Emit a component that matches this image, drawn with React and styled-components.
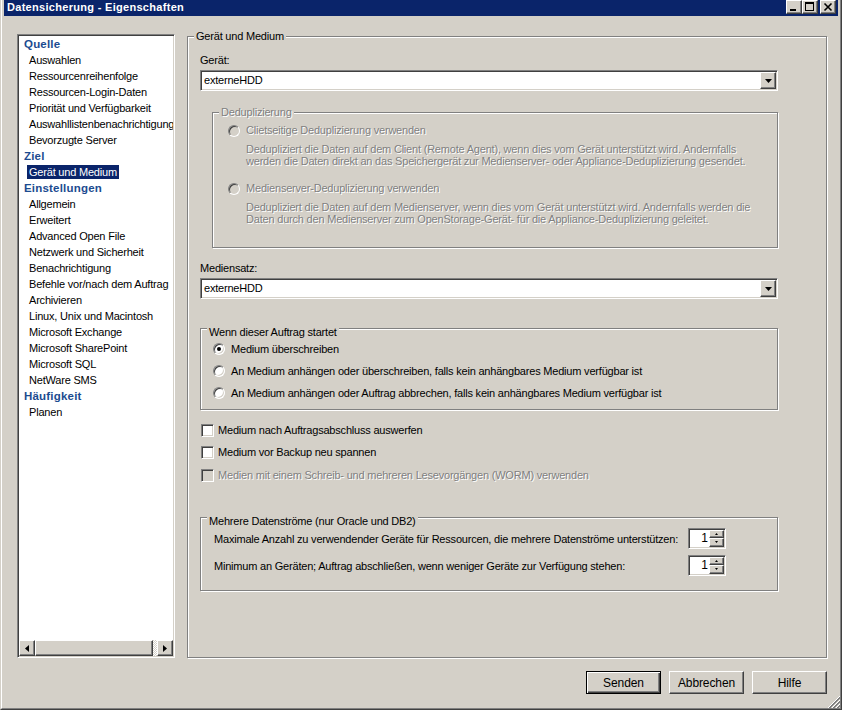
import React from "react";
import styled, { createGlobalStyle, css } from "styled-components";

const GlobalStyle = createGlobalStyle`
  * { box-sizing: border-box; }
  html, body { margin: 0; padding: 0; background: #d4d0c8; }
  body {
    font-family: "Liberation Sans", Arial, sans-serif;
    font-size: 11px;
    letter-spacing: -0.2px;
    color: #000;
  }
`;

// classic 3d borders
const raised = css`
  background: #d4d0c8;
  border: 1px solid;
  border-color: #fff #404040 #404040 #fff;
  box-shadow: inset -1px -1px #808080;
`;

const sunken = css`
  border: 1px solid;
  border-color: #808080 #fff #fff #808080;
  box-shadow: inset 1px 1px #404040, inset -1px -1px #d4d0c8;
`;

const disabledText = css`
  color: #808080;
  text-shadow: 1px 1px 0 #fff;
`;

const Frame = styled.div`
  position: relative;
  width: 842px;
  height: 710px;
  background: #d4d0c8;
  border-left: 1px solid #d4d0c8;
  border-right: 1px solid #404040;
  border-bottom: 1px solid #404040;
`;

const Window = styled.div`
  height: 100%;
  display: flex;
  flex-direction: column;
  border-left: 1px solid #fff;
  border-right: 1px solid #808080;
  border-bottom: 1px solid #808080;
  padding: 0 2px 1px;
`;

const TitleBar = styled.div`
  flex: none;
  height: 16px;
  background: #0a246a;
  display: flex;
  align-items: flex-start;
  justify-content: space-between;
  padding: 0 2px 0 3px;
`;

const Title = styled.span`
  color: #fff;
  font-weight: bold;
  font-size: 11px;
  letter-spacing: 0.3px;
  line-height: 14px;
  white-space: nowrap;
`;

const CaptionButtons = styled.div`
  display: flex;
`;

const CaptionButton = styled.div`
  ${raised};
  width: 16px;
  height: 14px;
  display: flex;
  align-items: center;
  justify-content: center;
  margin-left: ${(p) => (p.$gap ? "2px" : "0")};
  svg { display: block; }
`;

const Body = styled.div`
  flex: 1;
  min-height: 0;
  display: flex;
  flex-direction: column;
  padding: 18px 11px 13px 13px;
`;

const Main = styled.div`
  flex: 1;
  min-height: 0;
  display: flex;
  gap: 12px;
`;

const ListBox = styled.div`
  ${sunken};
  flex: none;
  width: 158px;
  padding: 1px;
  background: #fff;
  display: flex;
  flex-direction: column;
`;

const ListItems = styled.div`
  flex: 1;
  overflow: hidden;
`;

const NavRow = styled.div`
  height: 16px;
  display: flex;
  align-items: center;
  white-space: nowrap;
  padding-left: ${(p) => (p.$header ? "5px" : "8px")};
`;

const NavText = styled.span`
  display: inline-block;
  line-height: 14px;
  padding: ${(p) => (p.$header ? "0" : "0 2px")};
  font-weight: ${(p) => (p.$header ? "bold" : "normal")};
  font-size: ${(p) => (p.$header ? "11.5px" : "11px")};
  letter-spacing: ${(p) => (p.$header ? "0.2px" : "-0.2px")};
  color: ${(p) => (p.$header ? "#1c4b90" : p.$selected ? "#fff" : "#000")};
  background: ${(p) => (p.$selected ? "#0a246a" : "transparent")};
`;

const HScroll = styled.div`
  flex: none;
  height: 16px;
  display: flex;
`;

const ScrollButton = styled.div`
  ${raised};
  flex: none;
  width: 16px;
  display: flex;
  align-items: center;
  justify-content: center;
`;

const ScrollThumb = styled.div`
  ${raised};
  flex: 1;
`;

const ScrollTrack = styled.div`
  flex: none;
  width: 4px;
  background: repeating-conic-gradient(#fff 0 25%, #d4d0c8 0 50%) 0 0 / 2px 2px;
`;

const GroupBox = styled.div`
  display: flex;
  flex-direction: column;
  min-width: 0;
  border: 1px solid #808080;
  box-shadow: inset 1px 1px #fff, 1px 1px #fff;
  margin-top: ${(p) => p.$top || "0"};
  margin-left: ${(p) => p.$left || "0"};
  padding: ${(p) => p.$pad || "0"};
  flex: ${(p) => (p.$grow ? "1" : "none")};
`;

const GroupTitle = styled.div`
  align-self: flex-start;
  margin-top: -7px;
  margin-left: ${(p) => p.$indent || "6px"};
  padding: 0 2px;
  line-height: 12px;
  background: #d4d0c8;
  white-space: nowrap;
  ${(p) => p.$disabled && disabledText};
`;

const GroupContent = styled.div`
  display: flex;
  flex-direction: column;
  min-width: 0;
  padding: ${(p) => p.$pad || "0"};
`;

const FieldLabel = styled.div`
  line-height: 13px;
  margin-top: ${(p) => p.$top || "0"};
`;

const Combo = styled.div`
  ${sunken};
  background: #fff;
  height: 21px;
  margin-top: 3px;
  padding: 1px;
  display: flex;
  align-items: center;
`;

const ComboText = styled.span`
  flex: 1;
  padding-left: 2px;
  line-height: 17px;
`;

const DropButton = styled.div`
  ${raised};
  width: 16px;
  height: 17px;
  display: flex;
  align-items: center;
  justify-content: center;
`;

const OptionList = styled.div`
  margin-top: ${(p) => p.$top || "0"};
  padding-left: ${(p) => p.$indent || "0"};
`;

const OptionRow = styled.div`
  display: flex;
  align-items: center;
  height: ${(p) => p.$h || "13px"};
  margin-top: ${(p) => p.$top || "0"};
  white-space: nowrap;
`;

const Radio = styled.span`
  flex: none;
  position: relative;
  width: 12px;
  height: 12px;
  border-radius: 50%;
  border: 1px solid;
  border-color: #808080 #fff #fff #808080;
  box-shadow: inset 1px 1px #404040, inset -1px -1px #d4d0c8;
  background: ${(p) => (p.$disabled ? "#d4d0c8" : "#fff")};
  margin-right: 6px;
  &::after {
    content: "";
    display: ${(p) => (p.$checked ? "block" : "none")};
    position: absolute;
    left: 3px;
    top: 3px;
    width: 4px;
    height: 4px;
    border-radius: 50%;
    background: #000;
  }
`;

const Check = styled.span`
  flex: none;
  width: 13px;
  height: 13px;
  ${sunken};
  background: ${(p) => (p.$disabled ? "#d4d0c8" : "#fff")};
  margin-right: 4px;
`;

const OptionLabel = styled.span`
  line-height: 13px;
  ${(p) => p.$disabled && disabledText};
`;

const Description = styled.div`
  margin: ${(p) => p.$margin || "0"};
  line-height: 12px;
  white-space: nowrap;
  ${disabledText};
`;

const StreamRow = styled.div`
  display: grid;
  grid-template-columns: 1fr 38px;
  align-items: center;
  height: 23px;
  margin-top: ${(p) => p.$top || "0"};
`;

const StreamLabel = styled.span`
  line-height: 13px;
  padding-top: 3px;
  white-space: nowrap;
`;

const Spin = styled.div`
  ${sunken};
  height: 21px;
  background: #fff;
  padding: 1px;
  display: flex;
`;

const SpinValue = styled.span`
  flex: 1;
  text-align: right;
  padding-right: 1px;
  line-height: 16px;
  font-size: 12px;
  letter-spacing: 0;
`;

const SpinButtons = styled.div`
  width: 15px;
  display: flex;
  flex-direction: column;
`;

const SpinButton = styled.div`
  ${raised};
  flex: 1;
  display: flex;
  align-items: center;
  justify-content: center;
`;

const Footer = styled.div`
  flex: none;
  display: flex;
  justify-content: flex-end;
  gap: 8px;
  margin-top: 13px;
`;

const DialogButton = styled.div`
  ${raised};
  width: 75px;
  height: 23px;
  display: flex;
  align-items: center;
  justify-content: center;
  font-size: 12px;
  letter-spacing: -0.1px;
  ${(p) =>
    p.$default &&
    css`
      border-color: #000;
      box-shadow: inset 1px 1px #fff, inset -1px -1px #404040, inset -2px -2px #808080;
    `};
`;

const SizeGrip = styled.svg`
  position: absolute;
  right: 1px;
  bottom: 1px;
  display: block;
`;

const Arrow = ({ dir, size = 4 }) => {
  const s = size;
  const map = {
    down: { w: s * 2 - 1, h: s, pts: `0,0 ${s * 2 - 1},0 ${s - 0.5},${s}` },
    up: { w: s * 2 - 1, h: s, pts: `0,${s} ${s * 2 - 1},${s} ${s - 0.5},0` },
    left: { w: s, h: s * 2 - 1, pts: `${s},0 ${s},${s * 2 - 1} 0,${s - 0.5}` },
    right: { w: s, h: s * 2 - 1, pts: `0,0 0,${s * 2 - 1} ${s},${s - 0.5}` },
  };
  const a = map[dir];
  return (
    <svg width={a.w} height={a.h} viewBox={`0 0 ${a.w} ${a.h}`} style={{ display: "block" }}>
      <polygon points={a.pts} fill="#000" />
    </svg>
  );
};

const navItems = [
  ["Quelle", "h"],
  ["Auswahlen"],
  ["Ressourcenreihenfolge"],
  ["Ressourcen-Login-Daten"],
  ["Priorität und Verfügbarkeit"],
  ["Auswahllistenbenachrichtigung"],
  ["Bevorzugte Server"],
  ["Ziel", "h"],
  ["Gerät und Medium", "s"],
  ["Einstellungen", "h"],
  ["Allgemein"],
  ["Erweitert"],
  ["Advanced Open File"],
  ["Netzwerk und Sicherheit"],
  ["Benachrichtigung"],
  ["Befehle vor/nach dem Auftrag"],
  ["Archivieren"],
  ["Linux, Unix und Macintosh"],
  ["Microsoft Exchange"],
  ["Microsoft SharePoint"],
  ["Microsoft SQL"],
  ["NetWare SMS"],
  ["Häufigkeit", "h"],
  ["Planen"],
];

const startOptions = [
  ["Medium überschreiben", true],
  ["An Medium anhängen oder überschreiben, falls kein anhängbares Medium verfügbar ist", false],
  ["An Medium anhängen oder Auftrag abbrechen, falls kein anhängbares Medium verfügbar ist", false],
];

const checkOptions = [
  ["Medium nach Auftragsabschluss auswerfen", false],
  ["Medium vor Backup neu spannen", false],
  ["Medien mit einem Schreib- und mehreren Lesevorgängen (WORM) verwenden", true],
];

const ComboBox = ({ value }) => (
  <Combo>
    <ComboText>{value}</ComboText>
    <DropButton>
      <Arrow dir="down" />
    </DropButton>
  </Combo>
);

const SpinBox = ({ value }) => (
  <Spin>
    <SpinValue>{value}</SpinValue>
    <SpinButtons>
      <SpinButton>
        <Arrow dir="up" size={2} />
      </SpinButton>
      <SpinButton>
        <Arrow dir="down" size={2} />
      </SpinButton>
    </SpinButtons>
  </Spin>
);

export default function App() {
  return (
    <Frame>
      <GlobalStyle />
      <Window>
        <TitleBar>
          <Title>Datensicherung - Eigenschaften</Title>
          <CaptionButtons>
            <CaptionButton>
              <svg width="14" height="12">
                <rect x="3" y="8" width="6" height="2" fill="#000" />
              </svg>
            </CaptionButton>
            <CaptionButton>
              <svg width="14" height="12">
                <rect x="2" y="1" width="9" height="2" fill="#000" />
                <rect x="2" y="1" width="1" height="9" fill="#000" />
                <rect x="10" y="1" width="1" height="9" fill="#000" />
                <rect x="2" y="9" width="9" height="1" fill="#000" />
              </svg>
            </CaptionButton>
            <CaptionButton $gap>
              <svg width="14" height="12">
                <path d="M3.5 2.5 L10.5 9.5 M10.5 2.5 L3.5 9.5" stroke="#000" strokeWidth="1.6" />
              </svg>
            </CaptionButton>
          </CaptionButtons>
        </TitleBar>

        <Body>
          <Main>
            <ListBox>
              <ListItems>
                {navItems.map(([label, kind]) => (
                  <NavRow key={label} $header={kind === "h"}>
                    <NavText $header={kind === "h"} $selected={kind === "s"}>
                      {label}
                    </NavText>
                  </NavRow>
                ))}
              </ListItems>
              <HScroll>
                <ScrollButton>
                  <Arrow dir="left" />
                </ScrollButton>
                <ScrollThumb />
                <ScrollTrack />
                <ScrollButton>
                  <Arrow dir="right" />
                </ScrollButton>
              </HScroll>
            </ListBox>

            <GroupBox $top="2px" $grow>
              <GroupTitle>Gerät und Medium</GroupTitle>
              <GroupContent $pad="12px 48px 0 12px">
                <FieldLabel>Gerät:</FieldLabel>
                <ComboBox value="externeHDD" />

                <GroupBox $top="21px" $left="12px" $pad="0 0 22px 15px">
                  <GroupTitle $disabled $indent="-9px">
                    Deduplizierung
                  </GroupTitle>
                  <OptionRow $top="6px">
                    <Radio $disabled />
                    <OptionLabel $disabled>Clietseitige Deduplizierung verwenden</OptionLabel>
                  </OptionRow>
                  <Description $margin="6px 0 0 18px">
                    Dedupliziert die Daten auf dem Client (Remote Agent), wenn dies vom Gerät unterstützt wird. Andernfalls
                    <br />
                    werden die Daten direkt an das Speichergerät zur Medienserver- oder Appliance-Deduplizierung gesendet.
                  </Description>
                  <OptionRow $top="15px">
                    <Radio $disabled />
                    <OptionLabel $disabled>Medienserver-Deduplizierung verwenden</OptionLabel>
                  </OptionRow>
                  <Description $margin="6px 0 0 18px">
                    Dedupliziert die Daten auf dem Medienserver, wenn dies vom Gerät unterstützt wird. Andernfalls werden die
                    <br />
                    Daten durch den Medienserver zum OpenStorage-Gerät- für die Appliance-Deduplizierung geleitet.
                  </Description>
                </GroupBox>

                <FieldLabel $top="14px">Mediensatz:</FieldLabel>
                <ComboBox value="externeHDD" />

                <GroupBox $top="29px" $pad="4px 0 5px 12px">
                  <GroupTitle $indent="-6px">Wenn dieser Auftrag startet</GroupTitle>
                  {startOptions.map(([label, checked]) => (
                    <OptionRow key={label} $h="22px">
                      <Radio $checked={checked} />
                      <OptionLabel>{label}</OptionLabel>
                    </OptionRow>
                  ))}
                </GroupBox>

                <OptionList $top="9px" $indent="1px">
                  {checkOptions.map(([label, disabled]) => (
                    <OptionRow key={label} $h="22.5px">
                      <Check $disabled={disabled} />
                      <OptionLabel $disabled={disabled}>{label}</OptionLabel>
                    </OptionRow>
                  ))}
                </OptionList>

                <GroupBox $top="30px" $pad="4px 51px 13px 13px">
                  <GroupTitle $indent="-7px">Mehrere Datenströme (nur Oracle und DB2)</GroupTitle>
                  <StreamRow>
                    <StreamLabel>
                      Maximale Anzahl zu verwendender Geräte für Ressourcen, die mehrere Datenströme unterstützen:
                    </StreamLabel>
                    <SpinBox value="1" />
                  </StreamRow>
                  <StreamRow $top="4px">
                    <StreamLabel>
                      Minimum an Geräten; Auftrag abschließen, wenn weniger Geräte zur Verfügung stehen:
                    </StreamLabel>
                    <SpinBox value="1" />
                  </StreamRow>
                </GroupBox>
              </GroupContent>
            </GroupBox>
          </Main>

          <Footer>
            <DialogButton $default>Senden</DialogButton>
            <DialogButton>Abbrechen</DialogButton>
            <DialogButton>Hilfe</DialogButton>
          </Footer>
        </Body>
      </Window>

      <SizeGrip width="12" height="12">
        {[0, 4, 8].map((o) => (
          <g key={o}>
            <line x1={12} y1={o} x2={o} y2={12} stroke="#fff" />
            <line x1={12} y1={o + 1} x2={o + 1} y2={12} stroke="#808080" />
            <line x1={12} y1={o + 2} x2={o + 2} y2={12} stroke="#808080" />
          </g>
        ))}
      </SizeGrip>
    </Frame>
  );
}
